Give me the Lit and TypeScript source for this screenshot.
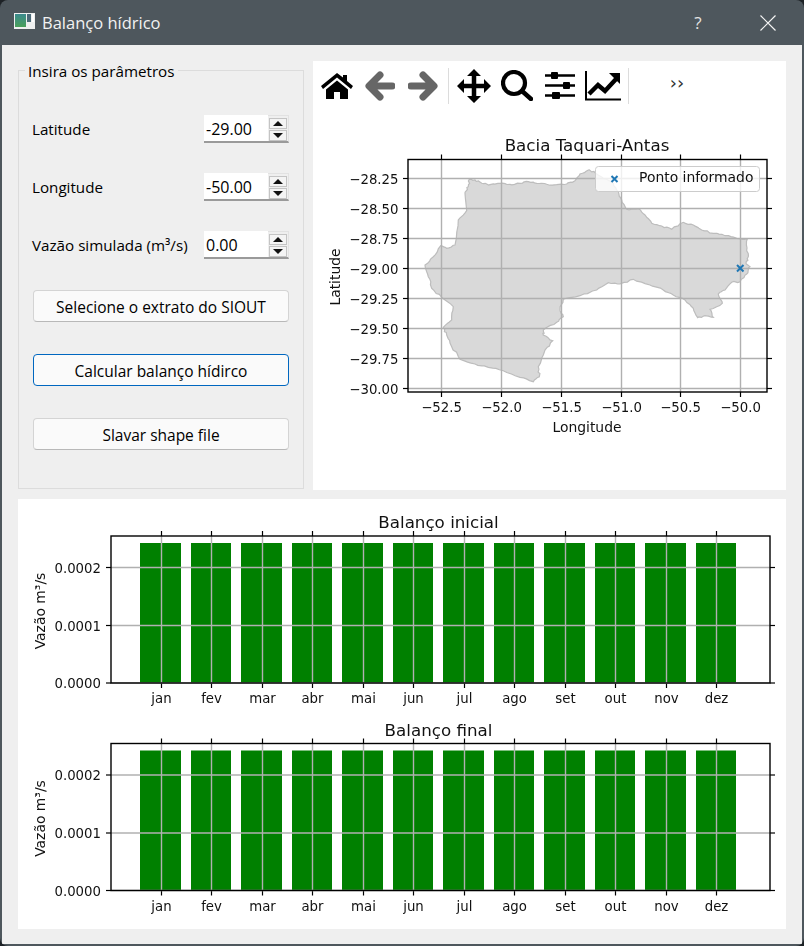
import { LitElement, html, css, svg } from "lit";
import { customElement } from "lit/decorators.js";

const RAW: number[][] = [[208,88],[225,90],[245,100],[270,104],[300,100],[330,103],[360,100],[385,95],[410,100],[440,103],[470,104],[500,102],[525,92],[540,72],[565,60],[585,68],[610,85],[640,100],[655,125],[665,150],[680,178],[715,176],[735,195],[755,220],[785,228],[815,238],[850,217],[880,225],[905,240],[940,250],[975,257],[1010,265],[1042,267],[1040,300],[1045,320],[1038,340],[1050,350],[1040,372],[1020,395],[995,397],[975,420],[955,432],[967,460],[930,478],[940,502],[915,497],[893,503],[880,475],[855,450],[820,435],[790,420],[750,405],[700,388],[660,402],[625,398],[590,420],[540,437],[490,448],[480,480],[490,500],[470,517],[430,540],[430,555],[458,572],[435,600],[415,650],[418,680],[400,695],[360,682],[310,662],[265,652],[225,642],[180,628],[155,590],[140,555],[130,532],[155,510],[160,470],[125,442],[95,415],[85,380],[75,345],[100,320],[122,287],[140,295],[165,285],[175,210],[200,182],[195,130],[205,110]];

function basinPath(): string {
  const out: string[] = [];
  let seed = 7;
  const rnd = () => {
    seed = (seed * 9301 + 49297) % 233280;
    return seed / 233280 - 0.5;
  };
  RAW.forEach((p, i) => {
    const q = RAW[(i + 1) % RAW.length];
    for (let t = 0; t < 4; t++) {
      const f = t / 4;
      const j = t === 0 ? 0 : 1.6;
      const x = 400 + (p[0] + (q[0] - p[0]) * f) / 3 + rnd() * j;
      const y = 150 + (p[1] + (q[1] - p[1]) * f) / 3 + rnd() * j;
      out.push(`${x.toFixed(1)},${y.toFixed(1)}`);
    }
  });
  return "M" + out.join("L") + "Z";
}

const MONTHS: [string, number, number, number][] = [
  ["jan", 161, 140, 181], ["fev", 211, 191, 231], ["mar", 262, 241, 282], ["abr", 312, 292, 332],
  ["mai", 363, 342, 383], ["jun", 413, 393, 433], ["jul", 464, 443, 484], ["ago", 514, 494, 534],
  ["set", 565, 544, 585], ["out", 615, 595, 635], ["nov", 666, 645, 686], ["dez", 716, 696, 736],
];

function barChart(dy: number, title: string) {
  const top = 536 + dy, bot = 683 + dy, left = 111;
  const ys: [string, number][] = [["0.0002", 567.5 + dy], ["0.0001", 625.5 + dy], ["0.0000", bot]];
  const R = 770;
  return svg`
    <text class="t title" x="438.5" y=${528 + dy} text-anchor="middle">${title}</text>
    ${MONTHS.map((m) => svg`<rect x=${m[2]} y=${543 + dy} width=${m[3] - m[2]} height=${bot - 543 - dy} fill="#008000"></rect>`)}
    ${MONTHS.map((m) => svg`
      <line class="grid" x1=${m[1] + 0.5} x2=${m[1] + 0.5} y1=${top} y2=${bot}></line>
      <line class="tick" x1=${m[1] + 0.5} x2=${m[1] + 0.5} y1=${top - 5} y2=${top}></line>
      <line class="tick" x1=${m[1] + 0.5} x2=${m[1] + 0.5} y1=${bot} y2=${bot + 5}></line>
      <text class="t num" x=${m[1] + 0.5} y=${703 + dy} text-anchor="middle">${m[0]}</text>`)}
    ${ys.map((v) => svg`
      <line class="grid" x1=${left} x2=${R} y1=${v[1]} y2=${v[1]}></line>
      <line class="tick" x1=${left - 5} x2=${left} y1=${v[1]} y2=${v[1]}></line>
      <line class="tick" x1=${R} x2=${R + 5} y1=${v[1]} y2=${v[1]}></line>
      <text class="t num" x="101" y=${v[1] + 5} text-anchor="end">${v[0]}</text>`)}
    <rect class="frame" x=${left} y=${top} width=${R - left} height=${bot - top}></rect>
    <text class="t" transform="translate(44.500,${611 + dy}) rotate(-90)" text-anchor="middle">Vazão m³/s</text>`;
}

function mapChart() {
  const L = 408, R = 767, T = 159.5, B = 392;
  const xs: [string, number][] = [["−52.5", 441.5], ["−52.0", 501.5], ["−51.5", 561.5], ["−51.0", 621.5], ["−50.5", 680.5], ["−50.0", 740.5]];
  const ys: [string, number][] = [["−28.25", 178.5], ["−28.50", 208.5], ["−28.75", 238.5], ["−29.00", 268.5], ["−29.25", 298.5], ["−29.50", 328.5], ["−29.75", 358.5], ["−30.00", 388.5]];
  return svg`
    <text class="t title" x="587" y="151" text-anchor="middle">Bacia Taquari-Antas</text>
    <path d=${basinPath()} fill="#d9d9d9" stroke="#bdbdbd" stroke-width="1.200"></path>
    ${xs.map((v) => svg`
      <line class="grid" x1=${v[1]} x2=${v[1]} y1=${T} y2=${B}></line>
      <line class="tick" x1=${v[1]} x2=${v[1]} y1=${T - 5} y2=${T}></line>
      <line class="tick" x1=${v[1]} x2=${v[1]} y1=${B} y2=${B + 5}></line>
      <text class="t num" x=${v[1]} y="412" text-anchor="middle">${v[0]}</text>`)}
    ${ys.map((v) => svg`
      <line class="grid" x1=${L} x2=${R} y1=${v[1]} y2=${v[1]}></line>
      <line class="tick" x1=${L - 5} x2=${L} y1=${v[1]} y2=${v[1]}></line>
      <line class="tick" x1=${R} x2=${R + 5} y1=${v[1]} y2=${v[1]}></line>
      <text class="t num" x="398.500" y=${v[1] + 5} text-anchor="end">${v[0]}</text>`)}
    <rect class="frame" x=${L} y=${T} width=${R - L} height=${B - T}></rect>
    <path d="M737 265l6.500 6.500M743.500 265l-6.500 6.500" stroke="#1f77b4" stroke-width="2" fill="none"></path>
    <rect x="595.500" y="166.500" width="164" height="25" rx="3" fill="#fff" fill-opacity=".8" stroke="#ccc"></rect>
    <path d="M611.500 176l6 6M617.500 176l-6 6" stroke="#1f77b4" stroke-width="2" fill="none"></path>
    <text class="t" x="639" y="182">Ponto informado</text>
    <text class="t" x="587" y="432" text-anchor="middle">Longitude</text>
    <text class="t" transform="translate(340,277) rotate(-90)" text-anchor="middle">Latitude</text>`;
}

const Spin = (v: string) => html`
  <div class="spin">
    <span class="val">${v}</span>
    <span class="arrows">
      <span class="arrow up"><svg width="10" height="5" viewBox="0 0 10 5"><path d="M5 0l5 5H0z"></path></svg></span>
      <span class="arrow"><svg width="10" height="5" viewBox="0 0 10 5"><path d="M5 5L0 0h10z"></path></svg></span>
    </span>
  </div>`;

@customElement("app-root")
export class AppRoot extends LitElement {
  static styles = css`
    :host { display: block; width: 804px; height: 946px; background: #1d2226; font-family: "Open Sans", "Noto Sans", sans-serif; color: #000; overflow: hidden; }
    .window { width: 804px; height: 946px; background: #4e575d; border-radius: 8px; display: flex; flex-direction: column; overflow: hidden; }
    .titlebar { height: 45px; flex: none; display: flex; align-items: center; padding-left: 14px; color: #f2f2f2; font-size: 16.500px; position: relative; }
    .appicon { width: 21px; height: 16px; margin-right: 7px; margin-top: -3px; }
    .tname { flex: 1; }
    .help { width: 20px; text-align: center; margin-right: 52px; font-size: 17px; color: #e4e4e4; }
    .close { width: 16px; height: 16px; margin-right: 28px; }
    .content { flex: 1; margin: 0 2px 2px; background: #efefef; padding: 16px 16px 15px; display: grid; grid-template-columns: 286px 473px; grid-template-rows: 429px 430px; gap: 9px; }
    .group { margin: 9px 0 1px; border: 1px solid #dcdcdc; padding: 44px 14px 0 13px; position: relative; display: flex; flex-direction: column; }
    .legend { position: absolute; left: 6px; top: -9px; padding: 0 3px; background: #efefef; font-size: 15.200px; line-height: 18px; }
    .row { height: 28px; display: flex; align-items: center; justify-content: space-between; margin-bottom: 30px; font-size: 15.200px; }
    .spin { width: 85px; height: 28px; box-sizing: border-box; background: #fff; border-bottom: 2px solid #9a9a9a; border-right: 1px solid #e2e2e2; display: flex; justify-content: space-between; font-size: 16px; padding-left: 2px; position: relative; }
    .val { flex: 1; display: flex; align-items: center; padding-top: 2px; }
    .arrows { display: flex; flex-direction: column; gap: 1px; width: 20px; box-sizing: border-box; padding: 2px 1px 0 1px; background: #efefef; border-top: 1px solid #e2e2e2; }
    .arrow { height: 11px; box-sizing: border-box; border: 1px solid #c4c4c4; display: flex; align-items: center; justify-content: center; background: #f4f4f4; }
    .arrow.up { height: 12px; }
    .arrow path { fill: #111; }
    .btn { height: 32px; box-sizing: border-box; margin: 1px 0 31px 1px; padding-top: 1px; border: 1px solid #d4d4d4; border-bottom-color: #b8b8b8; border-radius: 4px; background: #fafafa; display: flex; align-items: center; justify-content: center; font-size: 15.500px; }
    .btn.focus { border-color: #0067c0; }
    .panel { background: #fff; display: flex; flex-direction: column; min-width: 0; }
    .toolbar { height: 49px; flex: none; display: flex; align-items: center; padding-left: 2px; }
    .tool { width: 43px; height: 49px; display: flex; align-items: center; justify-content: center; flex: none; }
    .sep { width: 1px; height: 36px; background: #dcdcdc; margin: 0 3px 0 4px; flex: none; }
    .more { width: 90px; text-align: center; font-size: 18px; color: #333; font-family: "DejaVu Sans", sans-serif; padding-bottom: 6px; }
    .plot { display: block; flex: none; filter: blur(0.2px); }
    .t { font-family: "DejaVu Sans", sans-serif; font-size: 13.900px; fill: #111; }
    .num { font-size: 13.300px; }
    .title { font-size: 16.700px; }
    .grid { stroke: #b0b0b0; stroke-width: 1.400; }
    .tick { stroke: #000; stroke-width: 1.200; }
    .frame { fill: none; stroke: #000; stroke-width: 1.400; }
    .bottom { grid-column: 1 / 3; }
  `;

  render() {
    return html`
      <div class="window">
        <div class="titlebar">
          <svg class="appicon" viewBox="0 0 21 16">
            <rect width="21" height="16" fill="#eef0f0"></rect>
            <defs><linearGradient id="ag" x1="0" y1="0" x2="0" y2="1"><stop offset="0" stop-color="#3b8a8e"></stop><stop offset="1" stop-color="#49a05a"></stop></linearGradient></defs>
            <rect x="1" y="1" width="11" height="13" fill="url(#ag)"></rect>
            <rect x="13" y="1" width="4" height="8" fill="#4b6a78"></rect>
            <rect x="18" y="1" width="2" height="8" fill="#fff"></rect>
          </svg>
          <span class="tname">Balanço hídrico</span>
          <span class="help">?</span>
          <svg class="close" viewBox="0 0 16 16"><path d="M.5.500l15 15M15.500.500l-15 15" stroke="#f4f4f4" stroke-width="1.200" fill="none"></path></svg>
        </div>
        <div class="content">
          <div class="group">
            <div class="legend">Insira os parâmetros</div>
            <div class="row"><span>Latitude</span>${Spin("-29.00")}</div>
            <div class="row"><span>Longitude</span>${Spin("-50.00")}</div>
            <div class="row"><span>Vazão simulada (m³/s)</span>${Spin("0.00")}</div>
            <div class="btn">Selecione o extrato do SIOUT</div>
            <div class="btn focus">Calcular balanço hídirco</div>
            <div class="btn">Slavar shape file</div>
          </div>
          <div class="panel">
            <div class="toolbar">
              <span class="tool"><svg width="32" height="26" viewBox="0 0 32 26"><path d="M16 0L0 13l2 3L16 4.500 30 16l2-3-6-5V2h-4v2.500zM16 7.500L5 16.500V26h8v-7h6v7h8v-9.500z"></path></svg></span>
              <span class="tool"><svg width="30" height="30" viewBox="0 0 30 30"><path d="M27 15H5M15 4L4 15l11 11" stroke="#666" stroke-width="7" stroke-linejoin="round" stroke-linecap="round" fill="none"></path></svg></span>
              <span class="tool"><svg width="30" height="30" viewBox="0 0 30 30"><path d="M3 15h22M15 4l11 11-11 11" stroke="#666" stroke-width="7" stroke-linejoin="round" stroke-linecap="round" fill="none"></path></svg></span>
              <span class="sep"></span>
              <span class="tool"><svg width="34" height="34" viewBox="0 0 34 34"><path d="M17 4v26M4 17h26" stroke="#000" stroke-width="4.500" fill="none"></path><path d="M17 0l7 7H10zM17 34l-7-7h14zM0 17l7-7v14zM34 17l-7 7V10z"></path></svg></span>
              <span class="tool"><svg width="32" height="31" viewBox="0 0 32 31"><circle cx="13" cy="13" r="11" fill="none" stroke="#000" stroke-width="4.200"></circle><path d="M21 21l9 8" stroke="#000" stroke-width="4.500" stroke-linecap="round"></path></svg></span>
              <span class="tool"><svg width="30" height="27" viewBox="0 0 30 27"><path d="M0 3.500h30M0 13.500h30M0 23.500h30" stroke="#000" stroke-width="2.400"></path><rect x="6" y="0" width="7" height="7" rx="1"></rect><rect x="18" y="10" width="7" height="7" rx="1"></rect><rect x="7" y="20" width="8" height="7" rx="1"></rect></svg></span>
              <span class="tool"><svg width="36" height="30" viewBox="0 0 36 30"><path d="M1 0v28.500h35" stroke="#000" stroke-width="2" fill="none"></path><path d="M4 23l9-9 7 6 12-13" stroke="#000" stroke-width="4.500" fill="none"></path><path d="M24 2h11v11z"></path></svg></span>
              <span class="sep"></span>
              <span class="more">››</span>
            </div>
            <svg class="plot" width="473" height="380" viewBox="313 110 473 380">${mapChart()}</svg>
          </div>
          <div class="panel bottom">
            <svg class="plot" width="768" height="430" viewBox="18 499 768 430">${barChart(0, "Balanço inicial")}${barChart(207.500, "Balanço final")}</svg>
          </div>
        </div>
      </div>`;
  }
}
